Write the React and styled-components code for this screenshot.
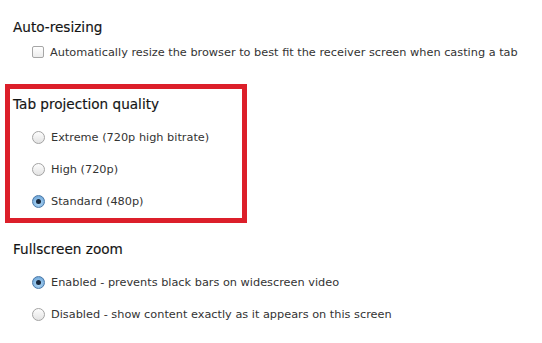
import React from 'react'
import styled, { createGlobalStyle } from 'styled-components'

const GlobalStyle = createGlobalStyle`
  html, body {
    margin: 0;
    padding: 0;
    background: #fff;
  }
  body {
    font-family: "DejaVu Sans", "Liberation Sans", sans-serif;
    -webkit-font-smoothing: antialiased;
  }
`;

const qualityOptions = [
  { id: 'extreme', label: 'Extreme (720p high bitrate)' },
  { id: 'high', label: 'High (720p)' },
  { id: 'standard', label: 'Standard (480p)' },
];

const zoomOptions = [
  { id: 'on', label: 'Enabled - prevents black bars on widescreen video' },
  { id: 'off', label: 'Disabled - show content exactly as it appears on this screen' },
];

function Radio({ checked }) {
  return (
    <RadioMark $checked={checked}>
      {checked && <RadioDot />}
    </RadioMark>
  );
}

function RadioGroup({ options, value }) {
  return options.map((opt) => (
    <OptionRow key={opt.id}>
      <Radio checked={opt.id === value} />
      <OptionLabel>{opt.label}</OptionLabel>
    </OptionRow>
  ));
}

export default function App() {
  return (
    <Page>
      <GlobalStyle />
      <Section>
        <Heading>Auto-resizing</Heading>
        <CheckRow>
          <CheckBox />
          <OptionLabel>
            Automatically resize the browser to best fit the receiver screen when casting a tab
          </OptionLabel>
        </CheckRow>
      </Section>

      <Highlight>
        <Heading>Tab projection quality</Heading>
        <Options>
          <RadioGroup options={qualityOptions} value="standard" />
        </Options>
      </Highlight>

      <Section $top={16}>
        <Heading>Fullscreen zoom</Heading>
        <Options>
          <RadioGroup options={zoomOptions} value="on" />
        </Options>
      </Section>
    </Page>
  );
}

const Page = styled.div`
  width: 542px;
  height: 343px;
  padding: 17px 0 0 13px;
  box-sizing: border-box;
  overflow: hidden;
`;

const Section = styled.section`
  margin-top: ${(p) => p.$top || 0}px;
`;

const Heading = styled.h2`
  margin: 0;
  font-size: 13.6px;
  font-weight: normal;
  line-height: 20px;
  color: #141414;
  -webkit-text-stroke: 0.15px #141414;
`;

const Options = styled.div`
  display: flex;
  flex-direction: column;
  margin-top: 7px;
`;

const OptionRow = styled.label`
  display: flex;
  align-items: center;
  gap: 6px;
  height: 32px;
  padding-left: 19px;
`;

const CheckRow = styled(OptionRow)`
  height: 24px;
  margin-top: 3px;
`;

const OptionLabel = styled.span`
  font-size: 11.3px;
  color: #333;
  white-space: nowrap;
`;

const CheckBox = styled.span`
  width: 10px;
  height: 10px;
  border: 1px solid #a6a6a6;
  border-radius: 2px;
  background: linear-gradient(#ffffff, #ececec);
  flex: none;
`;

const RadioMark = styled.span`
  display: flex;
  align-items: center;
  justify-content: center;
  width: 11px;
  height: 11px;
  border-radius: 50%;
  flex: none;
  border: 1px solid ${(p) => (p.$checked ? '#4a78a8' : '#a3a3a3')};
  background: ${(p) =>
    p.$checked
      ? 'radial-gradient(circle at 50% 65%, #b3daf7, #5f9bd2)'
      : 'linear-gradient(#fdfdfd, #e3e3e3)'};
`;

const RadioDot = styled.span`
  width: 5px;
  height: 5px;
  border-radius: 50%;
  background: #17283d;
`;

const Highlight = styled.section`
  margin: 20px 0 0 -8px;
  width: 226px;
  padding: 5px 3px 1px;
  border: 5px solid #dc1f2a;
`;
